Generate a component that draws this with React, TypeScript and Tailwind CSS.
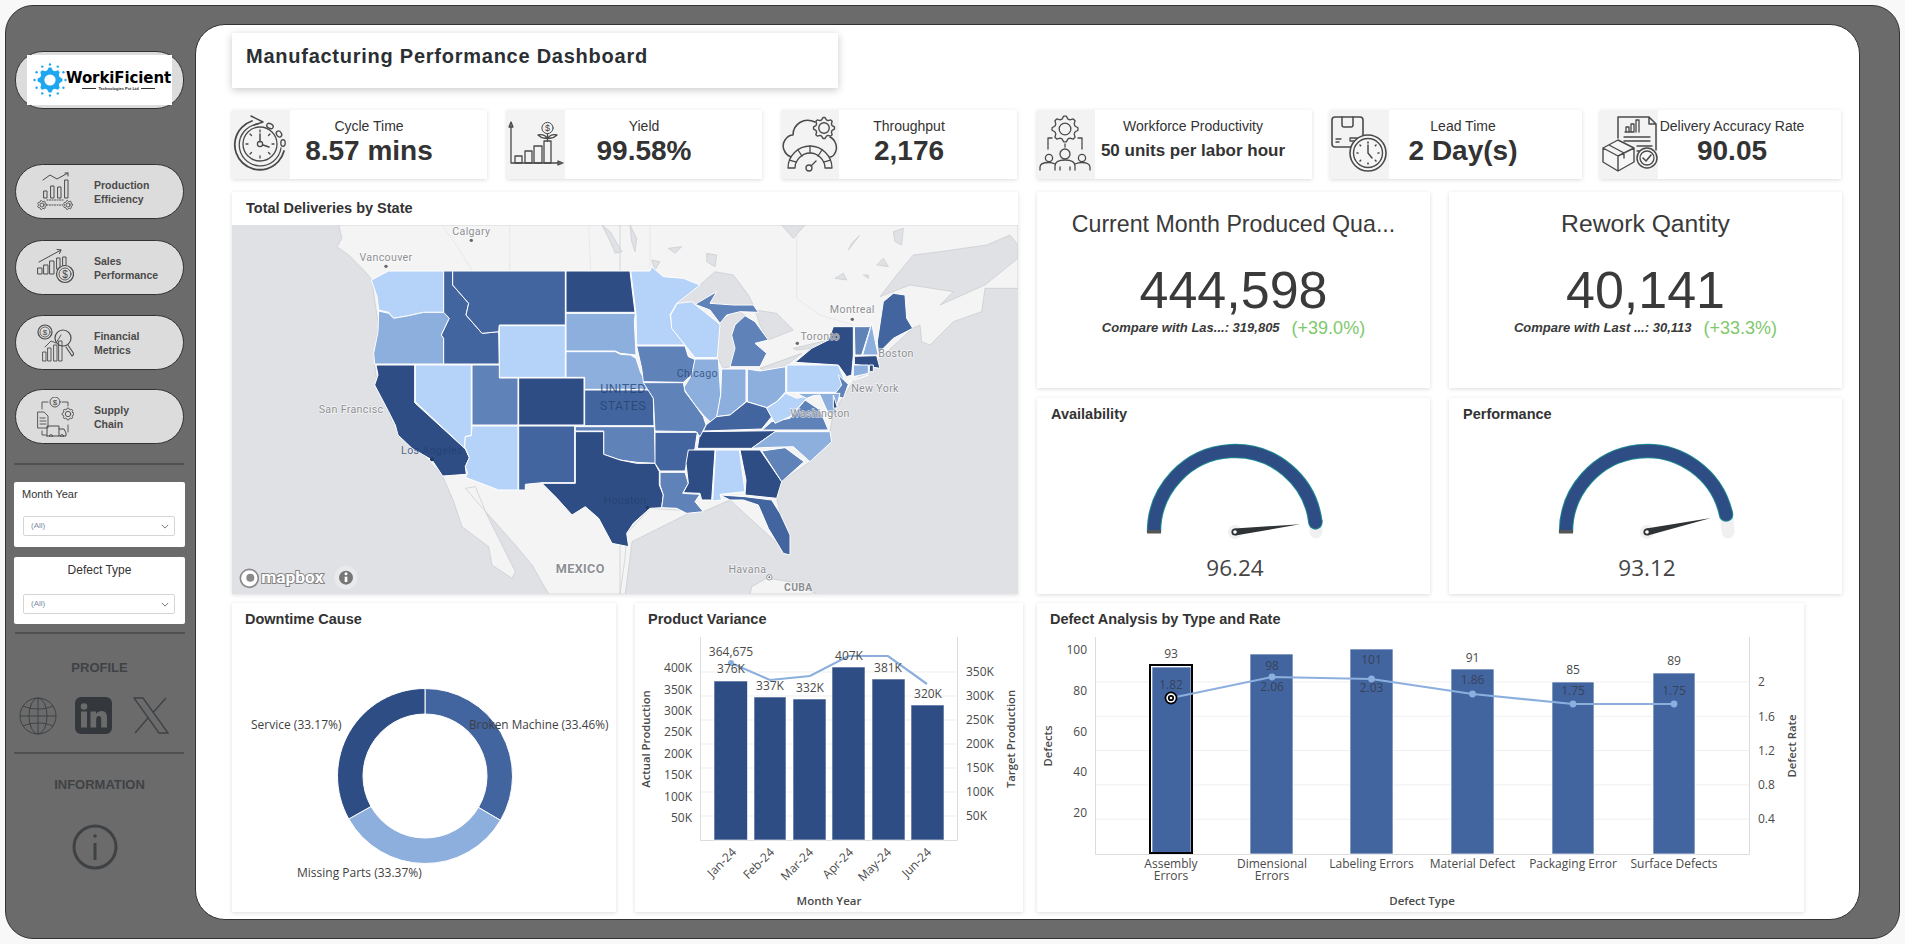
import React from "react";

const L = "#b5d3f9", ML = "#8cafde", M = "#5f82b9", MD = "#42659f", D = "#2e4d84";
const INK = "#4a4a4a";

const WEST: [string, string][] = [
  [L, "418,165 470,138 635,138 635,262 575,262 530,272 485,280 470,262 440,255 435,215"],
  [ML, "440,258 470,265 485,280 530,272 575,262 640,262 652,280 628,330 635,340 635,417 428,417 425,385 438,320"],
  [MD, "635,138 662,138 662,180 710,235 702,270 750,325 800,320 802,417 635,417 635,340 628,330 652,280 635,262"],
  [MD, "662,138 1000,138 1000,300 802,300 800,320 750,325 702,270 710,235 662,180"],
  [D, "1002,138 1194,138 1200,190 1209,262 1002,262"],
  [ML, "1002,265 1210,265 1207,290 1212,390 1165,385 1150,378 1002,378"],
  [L, "802,302 1000,302 1000,457 802,457"],
  [ML, "1002,380 1150,380 1165,388 1195,390 1212,400 1225,440 1240,470 1252,493 1058,493 1058,457 1002,457"],
  [D, "860,459 1056,459 1056,600 860,600"],
  [MD, "1058,495 1250,495 1264,520 1266,602 1058,602"],
  [M, "720,420 802,420 802,459 858,459 858,600 720,600"],
  [L, "550,420 718,420 718,630 700,635 698,670 550,530"],
  [D, "432,420 548,420 548,533 700,672 712,698 700,725 703,748 632,753 600,705 540,670 498,630 490,600 470,560 428,480 438,450"],
  [L, "720,603 858,603 858,795 800,795 700,757 707,745 700,725 712,698 698,665 700,635 718,632"],
  [MD, "860,603 1028,603 1028,773 930,773 880,778 880,795 860,795"],
  [M, "1030,605 1267,605 1271,715 1214,712 1164,705 1115,688 1115,618 1030,618"],
  [D, "1030,620 1115,620 1115,688 1164,705 1214,715 1269,715 1282,740 1282,780 1294,810 1289,848 1254,850 1204,895 1184,925 1190,965 1140,955 1100,880 1060,845 1020,870 975,820 930,775 1030,775"],
];

const EAST: [string, string][] = [
  [L, "32,138 90,138 95,125 130,155 190,160 240,180 170,235 150,270 160,315 195,360 50,360 48,265"],
  [L, "172,235 215,230 290,290 300,300 292,398 225,398 195,360 155,310 152,270"],
  [M, "225,238 290,200 270,235 340,240 400,240 415,262 360,260 320,270 300,295 270,255"],
  [M, "345,300 375,272 405,290 445,345 405,355 440,385 420,425 330,425 345,370 335,330"],
  [M, "50,363 195,363 205,395 228,405 215,450 190,472 70,470 65,430"],
  [ML, "225,402 295,402 302,510 295,560 280,600 250,570 225,540 190,490 215,450"],
  [ML, "305,432 378,432 378,530 330,570 290,575 302,510"],
  [ML, "382,432 420,438 497,425 497,500 470,530 440,548 382,530"],
  [MD, "258,600 290,575 330,570 380,530 440,548 455,575 425,612 250,618"],
  [D, "240,620 470,617 430,645 395,670 232,670"],
  [M, "70,473 190,473 195,500 225,540 250,575 258,600 240,635 228,620 105,618 100,520"],
  [MD, "105,622 232,622 225,670 200,715 195,738 120,738 105,715"],
  [M, "120,742 195,742 205,775 188,805 240,808 225,830 250,860 200,865 170,850 125,848 130,810 120,780"],
  [D, "205,675 285,675 275,825 245,825 240,805 190,803 205,775 198,715"],
  [L, "287,675 358,675 375,800 300,808 305,825 278,828"],
  [D, "360,675 420,675 485,770 470,820 375,810 378,765"],
  [MD, "300,810 375,815 455,825 480,865 510,930 510,990 490,985 445,910 415,840 370,825 330,825"],
  [M, "425,678 495,668 552,710 485,770"],
  [ML, "395,670 465,620 630,620 635,650 570,710 520,665 425,668"],
  [M, "430,612 455,590 510,580 555,525 600,555 625,615 420,615"],
  [L, "440,550 470,530 497,505 530,520 575,510 555,525 510,575 465,595"],
  [L, "500,420 655,420 675,470 660,502 500,502"],
  [D, "525,412 575,370 625,345 640,305 700,305 700,390 695,450 680,455 655,420"],
  [M, "655,450 685,478 670,520 642,510 665,480"],
  [ML, "530,505 660,505 650,545 640,575 620,555 600,510 580,512 560,520"],
  [D, "640,510 652,548 640,550"],
  [M, "703,305 752,305 725,390 705,390"],
  [ML, "755,295 770,370 775,390 728,390"],
  [MD, "772,350 790,230 820,205 855,210 860,280 878,310 820,340 775,385"],
  [D, "703,394 770,392 780,430 703,418"],
  [ML, "700,420 745,420 745,445 700,455"],
  [D, "748,420 760,420 760,440 748,440"],
  [D, "685,470 745,450 700,468"],
];

const LAKES = [
  "175,232 240,180 285,140 340,150 385,210 400,240 340,240 270,235 290,200 225,238",
  "345,262 300,290 292,395 310,430 330,425 345,370 335,330 345,300 375,272 360,260",
  "405,255 470,265 520,315 445,345 420,300",
  "420,430 545,385 500,420 440,440",
  "520,370 625,345 575,370 530,375",
  "260,85 290,90 285,125 260,110",
  "485,0 555,0 520,40",
  "685,75 718,32 695,55",
  "820,20 850,10 845,60 825,50",
  "645,160 670,145 680,165",
  "770,120 790,100 805,125",
  "730,150 745,150 745,160",
  "145,70 185,65 165,85",
  "95,105 120,110 105,135",
  "30,0 50,40 45,80 35,50",
];

function MapLabel({ x, y, t, size = 32, bold = false, anchor = "middle", dark = false }: { x: number; y: number; t: string; size?: number; bold?: boolean; anchor?: "middle" | "start" | "end"; dark?: boolean }) {
  return (
    <text x={x} y={y} textAnchor={anchor} fontSize={size} fontWeight={bold ? 700 : 400} fill={dark ? "#22406f" : "#8d8f93"} fillOpacity={dark ? 0.75 : 1} stroke={dark ? "none" : "#ffffff"} strokeOpacity={0.7} strokeWidth={dark ? 0 : 4} paintOrder="stroke" className="font-['Roboto',sans-serif]" letterSpacing={1}>
      {t}
    </text>
  );
}

function UsaMap() {
  return (
    <svg viewBox="0 0 2358 1107" className="block h-[369px] w-[786px]">
      <rect width="2358" height="1107" fill="#dfe1e5" />
      <g fill="#f4f4f5" stroke="#c6c8cc" strokeWidth="2">
        <polygon points="320,0 330,40 315,65 350,90 400,140 420,165 430,240 440,300 425,390 432,450 480,590 632,753 665,830 690,905 770,965 780,1020 840,1060 850,1040 800,940 765,870 730,785 700,790 770,870 850,960 900,1020 950,1107 1180,1107 1200,950 1500,800 1500,0" />
        <g transform="translate(1164,0)">
          <polygon points="0,0 1194,0 1194,190 1095,190 1085,260 1000,290 930,360 905,350 900,300 878,310 780,400 700,470 640,560 630,620 570,710 485,770 470,820 510,990 330,825 250,860 90,850 20,925 15,1000 0,1107" />
          <polygon points="780,215 830,150 880,90 960,80 1100,60 1170,30 1194,60 1194,100 1095,180 960,240 1000,200 870,180" fill="#dfe1e5" />
          <polygon points="390,1107 395,1085 440,1060 510,1070 590,1107" />
        </g>
      </g>
      <g stroke="#e2e3e6" strokeWidth="2" fill="none">
        <polyline points="630,0 680,70 720,135" />
        <line x1="833" y1="0" x2="833" y2="135" />
        <line x1="1070" y1="0" x2="1076" y2="135" />
        <polyline transform="translate(1164,0)" points="530,0 530,220 600,270 700,300" />
        <line transform="translate(1164,0)" x1="90" y1="0" x2="90" y2="130" />
      </g>
      <g transform="translate(1164,0)" fill="#dfe1e5" stroke="#c6c8cc" strokeWidth="2">
        {LAKES.map((p) => (
          <polygon key={p} points={p} />
        ))}
      </g>
      <polygon points="1110,0 1135,20 1170,80 1150,85 1130,40" fill="#dfe1e5" stroke="#c6c8cc" strokeWidth="2" />
      <g stroke="#ffffff" strokeWidth="3" strokeLinejoin="round">
        {WEST.map(([f, p]) => (
          <polygon key={p} fill={f} points={p} />
        ))}
        <g transform="translate(1164,0)">
          {EAST.map(([f, p]) => (
            <polygon key={p} fill={f} points={p} />
          ))}
        </g>
      </g>
      <MapLabel x={718} y={30} t="Calgary" />
      <circle cx={718} cy={46} r={5} fill="#666" />
      <MapLabel x={462} y={107} t="Vancouver" />
      <circle cx={462} cy={124} r={5} fill="#666" />
      <MapLabel x={260} y={563} t="San Francisc" anchor="start" />
      <MapLabel x={600} y={687} t="Los Angeles" dark />
      <circle cx={600} cy={703} r={6} fill="#1e3a66" />
      <MapLabel x={1045} y={1044} t="MEXICO" size={38} bold />
      <MapLabel x={1173} y={504} t="UNITED" size={38} dark />
      <MapLabel x={1173} y={554} t="STATES" size={38} dark />
      <MapLabel x={1115} y={836} t="Houston" anchor="start" dark />
      <circle cx={1246} cy={847} r={5} fill="#1e3a66" />
      <g transform="translate(1164,0)">
        <MapLabel x={232} y={457} t="Chicago" dark />
        <MapLabel x={600} y={345} t="Toronto" />
        <circle cx={532} cy={355} r={5} fill="#666" />
        <MapLabel x={697} y={264} t="Montreal" />
        <circle cx={697} cy={283} r={5} fill="#666" />
        <MapLabel x={828} y={396} t="Boston" />
        <MapLabel x={765} y={500} t="New York" />
        <MapLabel x={600} y={577} t="Washington" />
        <MapLabel x={382} y={1043} t="Havana" />
        <circle cx={448} cy={1057} r={8} fill="#fff" stroke="#666" strokeWidth="2" />
        <circle cx={448} cy={1057} r={3} fill="#666" />
        <MapLabel x={535} y={1098} t="CUBA" size={31} bold />
      </g>
      <circle cx={52} cy={1060} r={27} fill="#fff" stroke="#8a8a8a" strokeWidth="5" />
      <circle cx={55} cy={1058} r={12} fill="#8a8a8a" />
      <text x={88} y={1073} fontSize={52} fontWeight={700} fill="#fff" stroke="#858585" strokeWidth={6} paintOrder="stroke" className="font-['Roboto',sans-serif]">mapbox</text>
      <circle cx={342} cy={1058} r={35} fill="#e9eaec" />
      <circle cx={342} cy={1058} r={21} fill="#777" />
      <rect x={338} y={1055} width={8} height={16} fill="#fff" />
      <circle cx={342} cy={1046} r={4.5} fill="#fff" />
    </svg>
  );
}

function gearPath(cx: number, cy: number, r: number, teeth: number) {
  const pts: string[] = [];
  const n = teeth * 4;
  for (let i = 0; i < n; i++) {
    const a = ((i - 0.5) / n) * Math.PI * 2;
    const rr = i % 4 === 0 || i % 4 === 1 ? r : r * 0.8;
    pts.push(`${(cx + rr * Math.cos(a)).toFixed(2)},${(cy + rr * Math.sin(a)).toFixed(2)}`);
  }
  return pts.join(" ");
}

function Gear({ cx, cy, r, teeth = 8, hole = 0.45, sw = 1.2, fill = "none" }: { cx: number; cy: number; r: number; teeth?: number; hole?: number; sw?: number; fill?: string }) {
  return (
    <g strokeWidth={sw}>
      <polygon points={gearPath(cx, cy, r, teeth)} fill={fill} strokeLinejoin="round" />
      <circle cx={cx} cy={cy} r={r * hole} fill={fill} />
    </g>
  );
}

function Coin({ cx, cy, r, size, sw = 1 }: { cx: number; cy: number; r: number; size: number; sw?: number }) {
  return (
    <g>
      <circle cx={cx} cy={cy} r={r} strokeWidth={sw} fill="none" />
      <text x={cx} y={cy + size * 0.36} textAnchor="middle" fontSize={size} fill="#444" stroke="none" className="font-['Liberation_Sans',sans-serif]">$</text>
    </g>
  );
}

const IconFrame = ({ children, vb = "0 0 58 69", cls = "h-[69px] w-[58px]" }: { children: React.ReactNode; vb?: string; cls?: string }) => (
  <svg viewBox={vb} className={`block shrink-0 ${cls}`} fill="none" stroke="#4a4a4a" strokeWidth="1.3" strokeLinecap="round" strokeLinejoin="round">
    {children}
  </svg>
);

const CycleIcon = () => (
  <IconFrame>
    <path d="M20 11 A25 25 0 1 0 52 41" strokeWidth="1.8" />
    <path d="M26 14 A21 21 0 1 0 49 38" />
    <path d="M19 6 L31 12 L22 15" strokeWidth="1.5" />
    <ellipse cx="38" cy="16" rx="3.4" ry="2.4" transform="rotate(25 38 16)" />
    <ellipse cx="47" cy="24" rx="2.4" ry="3.2" transform="rotate(-35 47 24)" />
    <ellipse cx="51" cy="33" rx="2.2" ry="3.4" />
    <circle cx="28" cy="34" r="17" />
    <path d="M28 20v2M28 46v2M14 34h2M40 34h2M18 24l1.5 1.5M38 24l-1.5 1.5M18 44l1.5-1.5M38 44l-1.5-1.5" />
    <path d="M28 24v8M31 35l6 2" strokeWidth="1.5" />
    <circle cx="28" cy="34" r="2.6" />
  </IconFrame>
);

const YieldIcon = () => (
  <IconFrame>
    <path d="M4 13V53H54" />
    <path d="M2 17L4 12L6 17ZM51 51L56 53L51 55Z" />
    <rect x="8" y="46" width="7" height="7" />
    <rect x="18" y="41" width="7" height="12" />
    <rect x="27" y="36" width="8" height="17" />
    <rect x="37" y="31" width="7" height="22" />
    <Coin cx={40.5} cy={18} r={5.6} size={9} />
    <path d="M40.5 24V31M40 28C36 29 33 27 31 25C35 24 38 25 40 28ZM41 28C45 29 48 27 50 25C46 24 43 25 41 28Z" />
  </IconFrame>
);

const ThroughputIcon = () => (
  <IconFrame vb="0 0 57 69" cls="h-[69px] w-[57px]">
    <path d="M9 47C2 44 -1 36 3 30C5 27 8 25 11 25C11 14 22 7 33 12" strokeWidth="1.5" />
    <path d="M48 27C54 30 56 38 53 43C52 45 50 47 48 47" strokeWidth="1.5" />
    <Gear cx={42} cy={18} r={10.5} teeth={8} hole={0.5} sw={1.4} />
    <path d="M6 58C6 46 16 36 28 36C40 36 50 46 50 58H43C43 50 36 43 28 43C20 43 13 50 13 58Z" fill="#f3f3f3" />
    <path d="M28 36V43M16 40L20 46M40 40L36 46M7.5 50L14.5 52M48.5 50L41.5 52" />
    <circle cx="27" cy="58" r="3" />
    <path d="M29 56L34 51" />
  </IconFrame>
);

const WorkforceIcon = () => (
  <IconFrame>
    <Gear cx={28} cy={19} r={13} teeth={8} hole={0.45} sw={1.3} />
    <path d="M15 28H11V40M41 28H45V40M28 34V37" strokeDasharray="3 1" />
    <circle cx="28" cy="44" r="5" />
    <circle cx="12" cy="48" r="3.6" />
    <circle cx="45" cy="48" r="3.6" />
    <path d="M18 60V56C18 52 22 50 28 50C34 50 38 52 38 56V60M3 60V57C3 54 7 52.5 12 52.5C14 52.5 16 53 18 54M53 60V57C53 54 49 52.5 45 52.5C43 52.5 40 53 38 54M23 57V60M33 57V60" />
  </IconFrame>
);

const LeadIcon = () => (
  <IconFrame vb="0 0 59 69" cls="h-[69px] w-[59px]">
    <path d="M22 37H5A3 3 0 0 1 2 34V10A3 3 0 0 1 5 7H30A3 3 0 0 1 33 10V26" strokeWidth="1.6" />
    <path d="M12 7V15A2 2 0 0 0 14 17H21A2 2 0 0 0 23 15V7" strokeWidth="1.5" />
    <path d="M6 29H11M6 32H9M20 28H27V31H20Z" />
    <circle cx="38" cy="43" r="18" fill="#f6f6f6" strokeWidth="1.6" />
    <circle cx="38" cy="43" r="14.5" strokeWidth="1.4" />
    <path d="M38 32v1M38 53v1M27 43h1M48 43h1M30 35l.6.6M46 35l-.6.6M30 51l.6-.6M46 51l-.6-.6" strokeWidth="1.6" />
    <path d="M38 35V43L42 48" strokeWidth="1.5" />
  </IconFrame>
);

const DeliveryIcon = () => (
  <IconFrame>
    <path d="M18 28V7H49L56 14V40M49 7V14H56" strokeWidth="1.5" />
    <path d="M25 22h9M26 22v-5h3v5M31 22v-8h3v8M36 22v-12h3v12M24 27h26M24 31h26M37 36h15M37 41h5" />
    <path d="M3 38L18 30L34 38V52L18 61L3 52ZM3 38L18 46L34 38M18 46V61M9 35L24 43V48" fill="#f6f6f6" strokeWidth="1.4" />
    <circle cx="47" cy="48" r="10" fill="#f6f6f6" strokeWidth="1.5" />
    <circle cx="47" cy="48" r="7" />
    <path d="M43 48L46 51L51 45" strokeWidth="1.6" />
  </IconFrame>
);

const navSize = "h-[40px] w-[37px]";
const ProductionIcon = () => (
  <IconFrame vb="0 0 37 40" cls={navSize}>
    <path d="M6 8L13 3L20 7L31 1M28 1H31V4" strokeWidth="1" />
    <path d="M7 19h3v7H7ZM14 14h3v12h-3ZM21 15h3v11h-3ZM28 8h3v18h-3Z" strokeWidth="1" />
    <path d="M10 28H27M10 33H27" strokeWidth="1" strokeDasharray="1 1.5" />
    <Gear cx={5} cy={33} r={4.5} teeth={7} sw={0.9} />
    <Gear cx={31} cy={33} r={4.5} teeth={7} sw={0.9} />
  </IconFrame>
);
const SalesIcon = () => (
  <IconFrame vb="0 0 37 40" cls={navSize}>
    <path d="M2 14L24 2M20 1.5L24 2L22.5 5.5" strokeWidth="1" />
    <path d="M1 20h4v6H1ZM7 17h4v9H7ZM13 13h4v13h-4ZM20 10h3v11h-3ZM26 9h3v9h-3Z" strokeWidth="1" />
    <circle cx="28" cy="26" r="8.5" fill="#dcdcdc" strokeWidth="1.2" />
    <Coin cx={28} cy={26} r={6} size={10} sw={0.9} />
  </IconFrame>
);
const FinanceIcon = () => (
  <IconFrame vb="0 0 37 40" cls={navSize}>
    <circle cx="8" cy="9" r="7" strokeWidth="1.2" />
    <Coin cx={8} cy={9} r={5} size={8} sw={0.8} />
    <circle cx="26" cy="15" r="8" strokeWidth="1.2" />
    <path d="M31 22L37 31L35 33L29 24" strokeWidth="1.1" />
    <path d="M6 29h3v9H6ZM11 25h3v13h-3ZM17 22h3v16h-3ZM22 18h3v20h-3Z" strokeWidth="0.9" />
    <path d="M8 24L14 18L19 20L24 12" strokeWidth="0.9" />
  </IconFrame>
);
const SupplyIcon = () => (
  <IconFrame vb="0 0 37 40" cls={navSize}>
    <path d="M1 15H7L11 19V31H1Z M3 21H8M3 24H9M3 27H9" strokeWidth="0.9" />
    <Coin cx={18} cy={5} r={5} size={8} sw={0.9} />
    <path d="M5 12V5H11M25 5H31V9M5 34V38H9M31 28V35" strokeWidth="0.9" />
    <Gear cx={31} cy={17} r={6} teeth={8} sw={0.9} />
    <path d="M10 39V29H22V39H10ZM22 32H27L29 36V39H22" strokeWidth="1" />
    <circle cx="14" cy="39" r="1.5" strokeWidth="0.8" />
    <circle cx="25" cy="39" r="1.5" strokeWidth="0.8" />
  </IconFrame>
);

function NavPill({ icon, a, b, mt }: { icon: React.ReactNode; a: string; b: string; mt: string }) {
  return (
    <div className={`flex h-[55px] w-[169px] items-center rounded-[28px] border border-[#333] bg-[#dcdcdc] pl-[21px] ${mt}`}>
      <div className="w-[57px] shrink-0">{icon}</div>
      <div className="text-[10.5px] font-bold leading-[14px] text-[#4a4a4a]">
        <div>{a}</div>
        <div>{b}</div>
      </div>
    </div>
  );
}

const Chevron = () => (
  <svg viewBox="0 0 10 6" className="h-[5px] w-[8px]" fill="none" stroke="#555" strokeWidth="1">
    <path d="M1 1L5 5L9 1" />
  </svg>
);

function Logo() {
  const dots = Array.from({ length: 12 }, (_, i) => (i / 12) * Math.PI * 2);
  return (
    <div className="flex h-[50px] w-[145px] items-center bg-white pl-[6px]">
      <svg viewBox="0 0 34 34" className="h-[34px] w-[34px] shrink-0">
        <polygon points={gearPath(17, 17, 12.5, 8)} fill="#1ea7f0" />
        <circle cx="17" cy="17" r="5.6" fill="#fff" />
        {dots.map((a) => (
          <circle key={a} cx={17 + 15.5 * Math.cos(a)} cy={17 + 15.5 * Math.sin(a)} r="1.2" fill="#1ea7f0" />
        ))}
      </svg>
      <div className="-ml-[1px] flex flex-col items-center">
        <div className="text-[15px] font-bold leading-[16px] tracking-[-0.1px] text-black font-['DejaVu_Sans',sans-serif]">WorkiFicient</div>
        <div className="flex items-center gap-[2px] text-[4px] leading-[5px] text-[#222]">
          <span className="h-px w-[14px] bg-[#333]" />
          <span className="font-bold">Technologies Pvt Ltd</span>
          <span className="h-px w-[14px] bg-[#333]" />
        </div>
      </div>
    </div>
  );
}

const Divider = ({ cls }: { cls: string }) => <div className={`h-[2px] w-[170px] bg-[#505050] ${cls}`} />;

function Sidebar() {
  return (
    <aside className="flex h-full w-[189px] shrink-0 flex-col pl-[8px] pt-[45px]">
      <div className="ml-[1px] flex h-[58px] w-[169px] items-center justify-center rounded-[28px] border border-[#333] bg-[#dcdcdc]">
        <Logo />
      </div>
      <NavPill mt="ml-[1px] mt-[55px]" icon={<ProductionIcon />} a="Production" b="Efficiency" />
      <NavPill mt="ml-[1px] mt-[21px]" icon={<SalesIcon />} a="Sales" b="Performance" />
      <NavPill mt="ml-[1px] mt-[20px]" icon={<FinanceIcon />} a="Financial" b="Metrics" />
      <NavPill mt="ml-[1px] mt-[19px]" icon={<SupplyIcon />} a="Supply" b="Chain" />
      <Divider cls="mt-[19px]" />
      <div className="mt-[17px] h-[65px] w-[171px] rounded-[2px] bg-white pl-[8px] pt-[5px]">
        <div className="text-[11px] leading-[14px] text-[#333]">Month Year</div>
        <div className="ml-[1px] mt-[15px] flex h-[20px] w-[152px] items-center justify-between rounded-[2px] border border-[#d5d5d5] pl-[7px] pr-[5px] text-[8px] text-[#7d8aa5]">
          (All)
          <Chevron />
        </div>
      </div>
      <div className="mt-[10px] h-[67px] w-[171px] rounded-[2px] bg-white pl-[9px] pt-[6px]">
        <div className="w-[153px] text-center text-[12px] leading-[14px] text-[#333]">Defect Type</div>
        <div className="mt-[17px] flex h-[20px] w-[152px] items-center justify-between rounded-[2px] border border-[#d5d5d5] pl-[7px] pr-[5px] text-[8px] text-[#7d8aa5]">
          (All)
          <Chevron />
        </div>
      </div>
      <Divider cls="ml-[1px] mt-[8px]" />
      <div className="mt-[26px] w-[171px] text-center text-[13px] font-bold leading-[16px] text-[#3f4245]">PROFILE</div>
      <div className="mt-[21px] flex h-[37px] items-center pl-[5px]">
        <svg viewBox="0 0 38 38" className="h-[38px] w-[38px]" fill="none" stroke="#3f4245" strokeWidth="1">
          <circle cx="19" cy="19" r="18" />
          <ellipse cx="19" cy="19" rx="9" ry="18" />
          <path d="M19 1V37M1 19H37M4 9C13 13 25 13 34 9M4 29C13 25 25 25 34 29" />
        </svg>
        <svg viewBox="0 0 37 37" className="ml-[18px] h-[37px] w-[37px]">
          <rect width="37" height="37" rx="6" fill="#34383c" />
          <circle cx="9" cy="9.5" r="3.3" fill="#6b6b6b" />
          <rect x="6" y="14.5" width="6" height="16" fill="#6b6b6b" />
          <path d="M15.5 14.5H21V17C22 15.4 24 14 26.5 14C31 14 32 17 32 21V30.5H26.2V22.5C26.2 20.5 25.7 19 23.8 19C22 19 21.2 20.4 21.2 22.5V30.5H15.5Z" fill="#6b6b6b" />
        </svg>
        <svg viewBox="0 0 36 37" className="ml-[21px] h-[37px] w-[36px]" fill="none" stroke="#3f4245" strokeWidth="1.4">
          <path d="M1 1H10L35 36H26Z" />
          <path d="M33 1L20 15.5M15 21L2 36" />
        </svg>
      </div>
      <Divider cls="mt-[18px]" />
      <div className="mt-[23px] w-[171px] text-center text-[13px] font-bold leading-[16px] text-[#3f4245]">INFORMATION</div>
      <svg viewBox="0 0 46 46" className="ml-[58px] mt-[31px] h-[46px] w-[46px]" fill="none" stroke="#3f4245">
        <circle cx="23" cy="23" r="21" strokeWidth="3" />
        <path d="M23 19V36" strokeWidth="3" />
        <circle cx="23" cy="12" r="1.8" fill="#3f4245" stroke="none" />
      </svg>
    </aside>
  );
}

const cardShadow = "shadow-[0_1px_4px_rgba(0,0,0,0.14)]";

function Kpi({ icon, title, value, outer, text, valueCls = "text-[28px]" }: { icon: React.ReactNode; title: string; value: string; outer: string; text: string; valueCls?: string }) {
  return (
    <div className={`flex h-[69px] shrink-0 bg-white ${cardShadow} ${outer}`}>
      <div className="bg-[#f3f3f3]">{icon}</div>
      <div className={`flex flex-col items-center pt-[8px] ${text}`}>
        <div className="whitespace-nowrap text-[14px] leading-[16px] text-[#333]">{title}</div>
        <div className={`mt-[2px] flex h-[30px] items-center whitespace-nowrap font-bold leading-[30px] text-[#333] ${valueCls}`}>{value}</div>
      </div>
    </div>
  );
}

function BigStat({ title, titleCls, value, label, delta }: { title: string; titleCls: string; value: string; label: string; delta: string }) {
  return (
    <div className={`flex h-[196px] w-[393px] flex-col items-center bg-white pt-[18px] ${cardShadow}`}>
      <div className={`leading-[28px] text-[#3a3a3a] ${titleCls}`}>{title}</div>
      <div className="mt-[22px] text-[52px] leading-[60px] text-[#3a3a3a]">{value}</div>
      <div className="-mt-[1px] flex h-[18px] items-center gap-[12px]">
        <span className="text-[13px] font-bold italic text-[#3a3a3a]">{label}</span>
        <span className="text-[18px] text-[#7ec86c]">{delta}</span>
      </div>
    </div>
  );
}

function Gauge({ title, value }: { title: string; value: number }) {
  const cx = 198, cy = 102, r = 81;
  const sweep = (value / 100) * Math.PI;
  const ex = cx - r * Math.cos(sweep);
  const ey = cy - r * Math.sin(sweep);
  const len = 65.5;
  const tx = cx - len * Math.cos(sweep);
  const ty = cy - len * Math.sin(sweep);
  const px = Math.sin(sweep) * 3.6, py = -Math.cos(sweep) * 3.6;
  const arc = `M${cx - r} ${cy} A${r} ${r} 0 0 1 ${ex} ${ey}`;
  const rest = `M${ex} ${ey} A${r} ${r} 0 0 1 ${cx + r} ${cy}`;
  return (
    <div className={`flex h-[196px] w-[393px] flex-col bg-white ${cardShadow}`}>
      <div className="flex h-[32px] items-center pl-[14px] pt-[1px] text-[14.5px] font-bold text-[#333]">{title}</div>
      <svg viewBox="0 0 393 164" className="block h-[164px] w-[393px]">
        <path d={rest} fill="none" stroke="#f0f0f0" strokeWidth="13" strokeLinecap="round" />
        <path d={arc} fill="none" stroke="#1f8c92" strokeWidth="14.4" />
        <circle cx={ex} cy={ey} r="7.2" fill="#1f8c92" />
        <path d={arc} fill="none" stroke={D} strokeWidth="12.4" />
        <circle cx={ex} cy={ey} r="6.2" fill={D} />
        <rect x={cx - r - 7} y={cy - 2} width="14" height="3.5" fill="#555" />
        <circle cx={cx} cy={cy} r="7" fill="#f0f0f0" />
        <polygon points={`${tx},${ty} ${cx + px},${cy + py} ${cx - px},${cy - py}`} fill="#2f3336" />
        <circle cx={cx} cy={cy} r="3.6" fill="#2f3336" />
        <circle cx={cx} cy={cy} r="1.8" fill="#fff" />
        <text x={cx} y={146} textAnchor="middle" fontSize="22.5" fill="#444" className="font-['Open_Sans',sans-serif]">{value.toFixed(2)}</text>
      </svg>
    </div>
  );
}

function T({ x, y, t, a = "middle", s = 12, w = 400, f = INK, rot }: { x: number; y: number; t: string; a?: "middle" | "start" | "end"; s?: number; w?: number; f?: string; rot?: number }) {
  return (
    <text x={x} y={y} dy="0.35em" textAnchor={a} fontSize={s} fontWeight={w} fill={f} transform={rot !== undefined ? `rotate(${rot} ${x} ${y})` : undefined} className="font-['Open_Sans',sans-serif]">
      {t}
    </text>
  );
}

function T2({ x, a, b }: { x: number; a: string; b: string }) {
  return (
    <text x={x} y={868} textAnchor="middle" fontSize={12} fill={INK} className="font-['Open_Sans',sans-serif]">
      <tspan x={x}>{a}</tspan>
      <tspan x={x} dy={12}>{b}</tspan>
    </text>
  );
}

function slice(cx: number, cy: number, R: number, r: number, a0: number, a1: number) {
  const p = (rad: number, a: number) => `${(cx + rad * Math.sin(a)).toFixed(2)} ${(cy - rad * Math.cos(a)).toFixed(2)}`;
  return `M${p(R, a0)} A${R} ${R} 0 0 1 ${p(R, a1)} L${p(r, a1)} A${r} ${r} 0 0 0 ${p(r, a0)} Z`;
}

function Donut() {
  const tau = Math.PI * 2;
  const a1 = 0.3346 * tau, a2 = (0.3346 + 0.3337) * tau;
  return (
    <svg viewBox="232 635 384 277" className="block h-[277px] w-[384px]">
      <g stroke="#fff" strokeWidth="1">
        <path d={slice(425, 776, 87.5, 62, 0, a1)} fill={MD} />
        <path d={slice(425, 776, 87.5, 62, a1, a2)} fill={ML} />
        <path d={slice(425, 776, 87.5, 62, a2, tau)} fill={D} />
      </g>
      <T x={251} y={725} a="start" t="Service (33.17%)" f="#3f3f3f" />
      <T x={469} y={725} a="start" t="Broken Machine (33.46%)" f="#3f3f3f" s={11.8} />
      <T x={297} y={873} a="start" t="Missing Parts (33.37%)" f="#3f3f3f" />
    </svg>
  );
}

function Variance() {
  const bars = [[714, 681, 33.5], [754, 697, 32], [793, 699, 33], [832, 667, 33], [872, 679, 33], [911, 705, 33]];
  const left = ["400K", "350K", "300K", "250K", "200K", "150K", "100K", "50K"];
  const right = ["350K", "300K", "250K", "200K", "150K", "100K", "50K"];
  const line: [number, number][] = [[731, 663], [770, 680], [810, 676], [848.5, 656], [888, 656], [927, 684]];
  const xl = ["Jan-24", "Feb-24", "Mar-24", "Apr-24", "May-24", "Jun-24"];
  const xx = [737, 775, 814, 854, 892, 932];
  return (
    <svg viewBox="635 635 388 277" className="block h-[277px] w-[388px]">
      {right.map((_, i) => (
        <line key={i} x1="700" x2="958" y1={672 + i * 24} y2={672 + i * 24} stroke="#efefef" />
      ))}
      <path d="M700.5 637V840.5H957.5V637" fill="none" stroke="#dcdcdc" />
      {bars.map(([x, y, w]) => (
        <rect key={x} x={x} y={y} width={w} height={840 - y} fill={D} stroke="#fff" strokeOpacity="0.6" />
      ))}
      <polyline points={line.map((p) => p.join(",")).join(" ")} fill="none" stroke={ML} strokeWidth="2.2" />
      <circle cx="731" cy="663" r="3" fill={ML} />
      {left.map((t, i) => (
        <T key={t} x={692} y={668 + i * 21.4} a="end" t={t} />
      ))}
      {right.map((t, i) => (
        <T key={t} x={966} y={672 + i * 24} a="start" t={t} />
      ))}
      <T x={731} y={652} t="364,675" />
      <T x={731} y={669} t="376K" />
      <T x={770} y={686} t="337K" />
      <T x={810} y={688} t="332K" />
      <T x={849} y={656} t="407K" />
      <T x={888} y={668} t="381K" />
      <T x={928} y={694} t="320K" />
      {xl.map((t, i) => (
        <text key={t} x={xx[i]} y={853} textAnchor="end" fontSize="12" fill={INK} transform={`rotate(-45 ${xx[i]} 853)`} className="font-['Open_Sans',sans-serif]">{t}</text>
      ))}
      <T x={829} y={901} t="Month Year" s={11.5} w={600} />
      <T x={646} y={739} t="Actual Production" s={11.3} w={600} rot={-90} />
      <T x={1011} y={739} t="Target Production" s={11.3} w={600} rot={-90} />
    </svg>
  );
}

function Defects() {
  const bars = [[1152, 667, 39], [1250, 654, 43], [1350, 649, 43], [1451, 669, 43], [1552, 682, 42], [1653, 673, 42]];
  const pts: [number, number][] = [[1171, 698], [1272, 677], [1371.5, 679], [1472.5, 694], [1573, 704], [1674, 704]];
  const counts: [string, number, number, string][] = [["93", 1171, 654, INK], ["98", 1272, 666, "#38435a"], ["101", 1371.5, 660, "#38435a"], ["91", 1472.5, 658, INK], ["85", 1573, 670, INK], ["89", 1674, 661, INK]];
  const rates: [string, number, number][] = [["1.82", 1171, 685], ["2.06", 1272, 687], ["2.03", 1371.5, 688], ["1.86", 1472.5, 680], ["1.75", 1573, 691], ["1.75", 1674, 691]];
  const rt = ["2", "1.6", "1.2", "0.8", "0.4"];
  const lf = ["100", "80", "60", "40", "20"];
  return (
    <svg viewBox="1037 635 767 277" className="block h-[277px] w-[767px]">
      {rt.map((_, i) => (
        <line key={i} x1="1095" x2="1749" y1={682 + i * 34.3} y2={682 + i * 34.3} stroke="#efefef" />
      ))}
      <path d="M1095.5 637V854.5H1749.5V637" fill="none" stroke="#dcdcdc" />
      {bars.map(([x, y, w]) => (
        <rect key={x} x={x} y={y} width={w} height={854 - y} fill={MD} stroke="#fff" strokeOpacity="0.7" />
      ))}
      <rect x="1150" y="665" width="42" height="188" fill="none" stroke="#000" strokeWidth="2" />
      <polyline points={pts.map((p) => p.join(",")).join(" ")} fill="none" stroke={ML} strokeWidth="2.2" />
      {pts.map(([x, y]) => (
        <circle key={x} cx={x} cy={y} r="3.4" fill={ML} />
      ))}
      <circle cx="1171" cy="698" r="6.4" fill="#000" />
      <circle cx="1171" cy="698" r="4.7" fill="#fff" />
      <circle cx="1171" cy="698" r="3.1" fill="#000" />
      <circle cx="1171" cy="698" r="1.3" fill="#fff" />
      {counts.map(([t, x, y, f]) => (
        <T key={x} x={x} y={y} t={t} f={f} />
      ))}
      {rates.map(([t, x, y]) => (
        <T key={x} x={x} y={y} t={t} f="#38435a" />
      ))}
      {lf.map((t, i) => (
        <T key={t} x={1087} y={650 + i * 40.7} a="end" t={t} />
      ))}
      {rt.map((t, i) => (
        <T key={t} x={1758} y={682 + i * 34.3} a="start" t={t} />
      ))}
      <T2 x={1171} a="Assembly" b="Errors" />
      <T2 x={1272} a="Dimensional" b="Errors" />
      <T x={1371.5} y={864} t="Labeling Errors" />
      <T x={1472.5} y={864} t="Material Defect" />
      <T x={1573} y={864} t="Packaging Error" />
      <T x={1674} y={864} t="Surface Defects" />
      <T x={1422} y={901} t="Defect Type" s={11.5} w={600} />
      <T x={1048} y={746} t="Defects" s={11.3} w={600} rot={-90} />
      <T x={1792} y={746} t="Defect Rate" s={11.3} w={600} rot={-90} />
    </svg>
  );
}

function ChartCard({ title, width, children }: { title: string; width: string; children: React.ReactNode }) {
  return (
    <div className={`h-[309px] shrink-0 bg-white ${width} ${cardShadow}`}>
      <div className="flex h-[32px] items-center pl-[13px] pt-[1px] text-[14.5px] font-bold text-[#333]">{title}</div>
      {children}
    </div>
  );
}

export default function App() {
  return (
    <div className="h-[944px] w-[1905px] overflow-hidden bg-[#f8f8f8] pl-[5px] pt-[5px] font-['Liberation_Sans',Arial,sans-serif]">
      <div className="flex h-[934px] w-[1895px] rounded-[28px] border border-[#333] bg-[#6b6b6b]">
        <Sidebar />
        <main className="mt-[18px] h-[896px] w-[1665px] shrink-0 rounded-[30px] border border-[#333] bg-white pl-[36px] pt-[8px]">
          <div className="flex h-[55px] w-[606px] items-start bg-white pl-[14px] pt-[11px] text-[20px] font-bold leading-[24px] tracking-[0.75px] text-[#2b2f33] shadow-[0_2px_8px_rgba(0,0,0,0.22)]">
            Manufacturing Performance Dashboard
          </div>
          <div className="mt-[22px] flex">
            <Kpi icon={<CycleIcon />} title="Cycle Time" value="8.57 mins" outer="mr-[20px] w-[255px]" text="w-[158px]" />
            <Kpi icon={<YieldIcon />} title="Yield" value="99.58%" outer="mr-[20px] w-[255px]" text="w-[158px]" />
            <Kpi icon={<ThroughputIcon />} title="Throughput" value="2,176" outer="mr-[20px] w-[235px]" text="w-[140px]" />
            <Kpi icon={<WorkforceIcon />} title="Workforce Productivity" value="50 units per labor hour" outer="mr-[18px] w-[275px]" text="w-[196px]" valueCls="text-[17px]" />
            <Kpi icon={<LeadIcon />} title="Lead Time" value="2 Day(s)" outer="mr-[18px] w-[252px]" text="w-[148px]" />
            <Kpi icon={<DeliveryIcon />} title="Delivery Accuracy Rate" value="90.05" outer="w-[241px]" text="w-[148px]" />
          </div>
          <div className="mt-[13px] flex gap-[19px]">
            <div className={`h-[402px] w-[786px] shrink-0 bg-white ${cardShadow}`}>
              <div className="flex h-[33px] items-center pl-[14px] text-[14.5px] font-bold text-[#333]">Total Deliveries by State</div>
              <UsaMap />
            </div>
            <div className="grid grid-cols-[393px_393px] gap-x-[19px] gap-y-[10px]">
              <BigStat title="Current Month Produced Qua..." titleCls="text-[23.2px]" value="444,598" label="Compare with Las...: 319,805" delta="(+39.0%)" />
              <BigStat title="Rework Qantity" titleCls="text-[24.7px]" value="40,141" label="Compare with Last ...: 30,113" delta="(+33.3%)" />
              <Gauge title="Availability" value={96.24} />
              <Gauge title="Performance" value={93.12} />
            </div>
          </div>
          <div className="mt-[9px] flex">
            <ChartCard title="Downtime Cause" width="mr-[19px] w-[384px]"><Donut /></ChartCard>
            <ChartCard title="Product Variance" width="mr-[14px] w-[388px]"><Variance /></ChartCard>
            <ChartCard title="Defect Analysis by Type and Rate" width="w-[767px]"><Defects /></ChartCard>
          </div>
        </main>
      </div>
    </div>
  );
}
